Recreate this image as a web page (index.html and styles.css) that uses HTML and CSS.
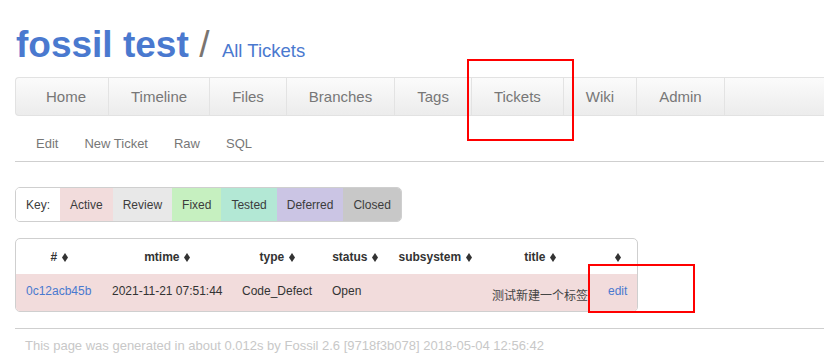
FILE: index.html
```html
<!DOCTYPE html>
<html>
<head>
<meta charset="utf-8">
<title>fossil test: All Tickets</title>
<link rel="stylesheet" href="styles.css">
</head>
<body>
<div class="page">
  <div class="header">
    <span class="title">fossil test</span>
    <span class="slash">/</span>
    <span class="subtitle">All Tickets</span>
  </div>
  <div class="mainmenu">
    <a class="nav-item">Home</a>
    <a class="nav-item">Timeline</a>
    <a class="nav-item">Files</a>
    <a class="nav-item">Branches</a>
    <a class="nav-item">Tags</a>
    <a class="nav-item">Tickets</a>
    <a class="nav-item">Wiki</a>
    <a class="nav-item">Admin</a>
  </div>
  <div class="submenu">
    <a class="sub-item">Edit</a>
    <a class="sub-item">New Ticket</a>
    <a class="sub-item">Raw</a>
    <a class="sub-item">SQL</a>
  </div>
  <div class="content">
    <div class="keybox">
      <div class="key key-label">Key:</div>
      <div class="key key-active">Active</div>
      <div class="key key-review">Review</div>
      <div class="key key-fixed">Fixed</div>
      <div class="key key-tested">Tested</div>
      <div class="key key-deferred">Deferred</div>
      <div class="key key-closed">Closed</div>
    </div>
    <div class="tablebox">
      <table class="report">
        <colgroup>
          <col class="c1"><col class="c2"><col class="c3"><col class="c4"><col class="c5"><col class="c6"><col class="c7">
        </colgroup>
        <thead>
          <tr>
            <th># <svg class="sort" width="6" height="9" viewBox="0 0 6 9"><polygon points="3,0 6,4.5 3,9 0,4.5"/></svg></th>
            <th>mtime <svg class="sort" width="6" height="9" viewBox="0 0 6 9"><polygon points="3,0 6,4.5 3,9 0,4.5"/></svg></th>
            <th>type <svg class="sort" width="6" height="9" viewBox="0 0 6 9"><polygon points="3,0 6,4.5 3,9 0,4.5"/></svg></th>
            <th>status <svg class="sort" width="6" height="9" viewBox="0 0 6 9"><polygon points="3,0 6,4.5 3,9 0,4.5"/></svg></th>
            <th>subsystem <svg class="sort" width="6" height="9" viewBox="0 0 6 9"><polygon points="3,0 6,4.5 3,9 0,4.5"/></svg></th>
            <th>title <svg class="sort" width="6" height="9" viewBox="0 0 6 9"><polygon points="3,0 6,4.5 3,9 0,4.5"/></svg></th>
            <th><svg class="sort" width="6" height="9" viewBox="0 0 6 9"><polygon points="3,0 6,4.5 3,9 0,4.5"/></svg></th>
          </tr>
        </thead>
        <tbody>
          <tr class="row-active">
            <td><a class="link">0c12acb45b</a></td>
            <td>2021-11-21 07:51:44</td>
            <td>Code_Defect</td>
            <td>Open</td>
            <td></td>
            <td class="cjk">测试新建一个标签</td>
            <td><a class="link">edit</a></td>
          </tr>
        </tbody>
      </table>
    </div>
  </div>
  <div class="footer">This page was generated in about 0.012s by Fossil 2.6 [9718f3b078] 2018-05-04 12:56:42</div>
</div>
<div class="mark mark-tickets"></div>
<div class="mark mark-edit"></div>
</body>
</html>
```
FILE: styles.css
```css
html, body {
  margin: 0;
  padding: 0;
  overflow: hidden;
  background: #fff;
}
body {
  font-family: "Liberation Sans", Arial, "Noto Sans CJK SC", sans-serif;
  color: #333;
  position: relative;
}
.page {
  width: 880px;
  padding-left: 15px;
}
.header {
  padding-top: 23px;
  height: 44px;
  line-height: 44px;
  white-space: nowrap;
}
.title {
  font-size: 37px;
  font-weight: bold;
  color: #4a79cf;
  padding-left: 1px;
}
.slash {
  font-size: 37px;
  color: #7a7470;
  margin-left: 6px;
}
.subtitle {
  font-size: 18.5px;
  color: #4a79cf;
  margin-left: 8px;
}
.mainmenu {
  margin-top: 10px;
  display: flex;
  height: 37px;
  border: 1px solid #e2e2e2;
  border-right: none;
  border-radius: 4px 0 0 4px;
  background: linear-gradient(#fbfbfb, #ececec);
  padding-left: 8px;
}
.nav-item {
  display: block;
  line-height: 37px;
  padding: 0 22px;
  font-size: 15px;
  color: #777;
  border-right: 1px solid #e3e3e3;
}
.submenu {
  display: flex;
  gap: 26px;
  padding: 18px 0 7px 21px;
  line-height: 20px;
  border-bottom: 1px solid #cfcfcf;
}
.sub-item {
  font-size: 13px;
  color: #777;
}
.content {
  padding-top: 25px;
}
.keybox {
  display: inline-flex;
  border: 1px solid #cfcfcf;
  border-radius: 5px;
  overflow: hidden;
}
.key {
  font-size: 12px;
  line-height: 32px;
  padding: 1px 10px 0;
  color: #3c3c3c;
}
.key-label { background: #fff; }
.key-active { background: #f2dcdc; }
.key-review { background: #e8e8e8; }
.key-fixed { background: #c6f0c0; }
.key-tested { background: #b3e8d5; }
.key-deferred { background: #cbc5e4; }
.key-closed { background: #c8c8c8; }
.tablebox {
  margin-top: 16px;
  width: 621px;
  border: 1px solid #cfcfcf;
  border-radius: 5px;
  overflow: hidden;
}
.report {
  width: 621px;
  table-layout: fixed;
  border-collapse: collapse;
  font-size: 12px;
}
.c1 { width: 86px; }
.c2 { width: 130px; }
.c3 { width: 90px; }
.c4 { width: 66px; }
.c5 { width: 94px; }
.c6 { width: 116px; }
.c7 { width: 39px; }
.report th {
  height: 35px;
  padding: 0;
  font-weight: bold;
  text-align: center;
  color: #333;
  white-space: nowrap;
}
.report td {
  height: 33px;
  padding: 0 0 4px 10px;
  white-space: nowrap;
  overflow: hidden;
  color: #333;
}
.row-active { background: #f2dcdc; }
.sort {
  fill: #333;
  vertical-align: -1px;
  margin-left: 1px;
}
.link {
  color: #4a79cf;
}
.report td.cjk {
  font-family: "Noto Sans CJK SC", sans-serif;
  font-size: 12px;
  height: 34px;
  padding: 3px 0 0 10px;
  color: #444;
}
.footer {
  margin-top: 16px;
  border-top: 1px solid #cfcfcf;
  padding: 8px 0 0 10px;
  line-height: 18px;
  font-size: 13px;
  color: #c8c8c8;
}
.mark {
  position: absolute;
  border: 2px solid #f00;
  box-sizing: border-box;
}
.mark-tickets {
  left: 467px;
  top: 59px;
  width: 107px;
  height: 82px;
}
.mark-edit {
  left: 588px;
  top: 264px;
  width: 107px;
  height: 49px;
}
```
